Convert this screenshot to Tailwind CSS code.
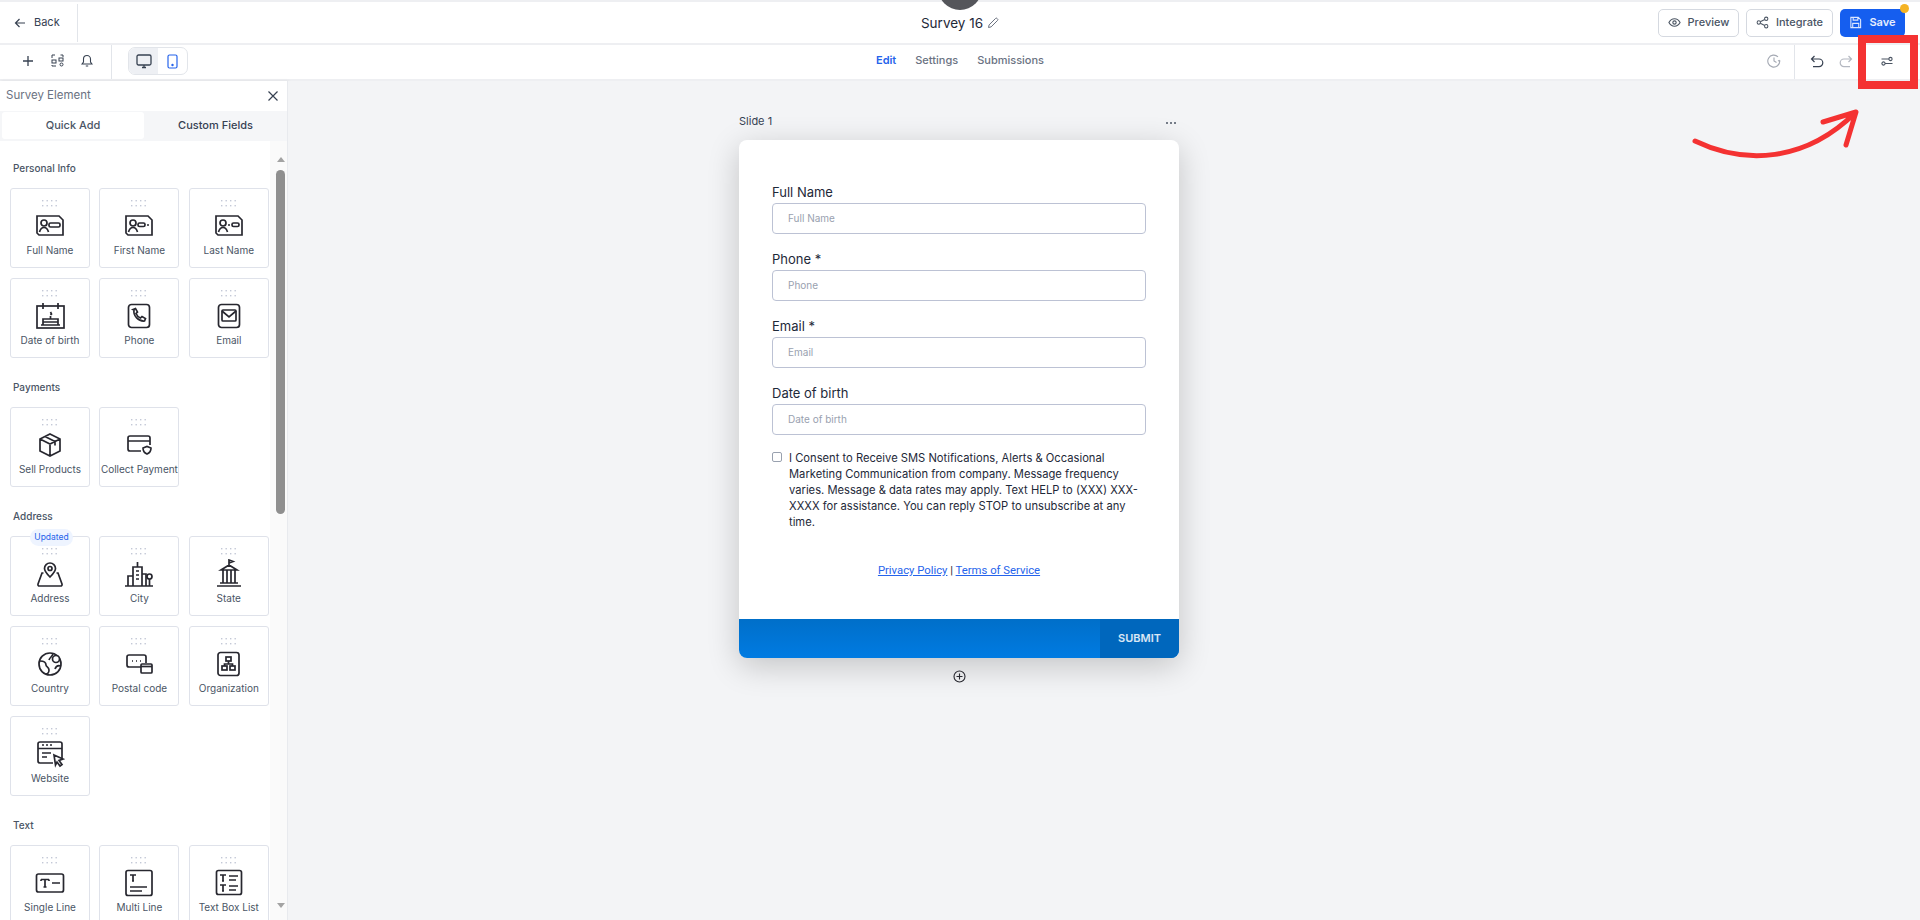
<!DOCTYPE html>
<html lang="en">
<head>
<meta charset="UTF-8" />
<meta name="viewport" content="width=device-width, initial-scale=1.0" />
<title>Survey 16</title>
<script src="https://cdn.jsdelivr.net/npm/@tailwindcss/browser@4"></script>
</head>
<body class="relative w-[1920px] h-[920px] overflow-hidden bg-white font-['Inter','Noto_Sans',sans-serif]">

<svg class="hidden">
  <symbol id="dots" viewBox="0 0 16 7"><g fill="#c3c8d6"><rect x="0" y="0" width="1.4" height="1.4"/><rect x="4.5" y="0" width="1.4" height="1.4"/><rect x="9" y="0" width="1.4" height="1.4"/><rect x="13.5" y="0" width="1.4" height="1.4"/><rect x="0" y="5" width="1.4" height="1.4"/><rect x="4.5" y="5" width="1.4" height="1.4"/><rect x="9" y="5" width="1.4" height="1.4"/><rect x="13.5" y="5" width="1.4" height="1.4"/></g></symbol>
</svg>

<!-- top bar -->
<header class="h-[45px] border-t-2 border-b-2 border-[#eeeff2] grid grid-cols-[1fr_auto_1fr] items-center">
  <div class="flex items-center h-full">
    <div class="w-[78px] h-[38px] border-r border-[#e2e5ea] flex items-center pl-[14px] gap-[8px] text-[11px] text-gray-700">
      <svg width="12" height="12" viewBox="0 0 12 12" fill="none" stroke="#374151" stroke-width="1.2"><path d="M11 6H1.5M5.5 2 1.5 6l4 4"/></svg>
      <span>Back</span>
    </div>
  </div>
  <div class="flex items-center gap-[4px] text-[13.5px] text-gray-800 pt-[1px]">
    <span>Survey 16</span>
    <svg width="12" height="12" viewBox="0 0 12 12" fill="none" stroke="#6b7280" stroke-width="1"><path d="M1.5 10.5l.6-2.6L8.6 1.4a1 1 0 0 1 1.4 0l.6.6a1 1 0 0 1 0 1.4L4.1 9.9z"/></svg>
  </div>
  <div class="flex items-center justify-end gap-[7px] pr-[15px] text-[11px] font-medium">
    <button class="w-[81px] h-[28px] border border-[#d5d9e0] rounded-[5px] flex items-center justify-center gap-[7px] text-gray-600">
      <svg width="13" height="13" viewBox="0 0 14 14" fill="none" stroke="#4b5563" stroke-width="1.2"><path d="M1 7s2.2-4 6-4 6 4 6 4-2.2 4-6 4-6-4-6-4z"/><circle cx="7" cy="7" r="1.8"/></svg>Preview
    </button>
    <button class="w-[87px] h-[28px] border border-[#d5d9e0] rounded-[5px] flex items-center justify-center gap-[7px] text-gray-600">
      <svg width="13" height="13" viewBox="0 0 14 14" fill="none" stroke="#4b5563" stroke-width="1.1"><circle cx="11" cy="3" r="1.8"/><circle cx="3" cy="7" r="1.8"/><circle cx="11" cy="11" r="1.8"/><path d="M4.6 6.2l4.8-2.4M4.6 7.8l4.8 2.4"/></svg>Integrate
    </button>
    <button class="relative w-[65px] h-[28px] bg-[#155eef] rounded-[5px] flex items-center justify-center gap-[7px] text-white/90 font-semibold">
      <svg width="13" height="13" viewBox="0 0 14 14" fill="none" stroke="#dbe6ff" stroke-width="1.2"><path d="M2 1.5h8l2.5 2.5v8.5H2zM4.5 1.5v3h5v-3M4 12.5V8h6.5v4.5"/></svg>Save
      <span class="absolute -top-[5px] -right-[4px] w-[9px] h-[9px] rounded-full bg-[#f5b324]"></span>
    </button>
  </div>
</header>

<!-- toolbar -->
<div class="h-[36px] border-b-2 border-[#eeeff2] grid grid-cols-[1fr_auto_1fr] items-center">
  <div class="flex items-center h-full">
    <div class="w-[112px] h-full border-r border-[#e2e5ea] flex items-center pl-[22px] pb-[3px] gap-[17px]">
      <svg width="12" height="12" viewBox="0 0 12 12" fill="none" stroke="#374151" stroke-width="1.3"><path d="M6 1v10M1 6h10"/></svg>
      <svg width="13" height="13" viewBox="0 0 13 13" fill="none" stroke="#374151" stroke-width="1"><path d="M1 4V1h3M9.5 1H12v2"/><rect x="1" y="6" width="4" height="3"/><rect x="8" y="4" width="4" height="3"/><circle cx="10.5" cy="10.5" r="1.5"/><path d="M1 11v1h4"/></svg>
      <svg width="12" height="13" viewBox="0 0 12 13" fill="none" stroke="#374151" stroke-width="1.1"><path d="M1 10h10L9.5 8V5a3.5 3.5 0 0 0-7 0v3zM4.8 12h2.4"/></svg>
    </div>
    <div class="ml-[16px] -mt-[2px] w-[60px] h-[28px] border border-[#e2e5ea] rounded-[7px] flex overflow-hidden">
      <div class="w-[29px] bg-[#eef0f4] flex items-center justify-center">
        <svg width="16" height="15" viewBox="0 0 16 15" fill="none" stroke="#374151" stroke-width="1.3"><rect x="1" y="1" width="14" height="10" rx="1.5"/><path d="M6 13.5h4M8 11v2"/></svg>
      </div>
      <div class="flex-1 flex items-center justify-center pr-[1px]">
        <svg width="11" height="15" viewBox="0 0 11 15" fill="none" stroke="#2563eb" stroke-width="1.2"><rect x="1" y="1" width="9" height="13" rx="1.5"/><circle cx="5.5" cy="11" r=".6" fill="#2563eb"/></svg>
      </div>
    </div>
  </div>
  <nav class="flex items-center gap-[19px] pb-[3px] text-[11px] font-medium text-gray-500">
    <span class="text-[#2563eb] font-semibold">Edit</span>
    <span>Settings</span>
    <span>Submissions</span>
  </nav>
  <div class="flex items-center justify-end h-full">
    <svg class="-mt-[2px]" width="14" height="14" viewBox="0 0 14 14" fill="none" stroke="#a3a8b2" stroke-width="1.1"><path d="M12.8 7A6 6 0 1 1 11 2.8M7 3.5V7l2.5 1.5M13 6l-.8 1.2L11 6.4"/></svg>
    <div class="w-px h-full bg-[#e2e5ea] ml-[13px]"></div>
    <svg class="ml-[15px] -mt-[2px]" width="14" height="13" viewBox="0 0 14 13" fill="none" stroke="#374151" stroke-width="1.2"><path d="M4.5 1 1.5 4l3 3M1.5 4H9a3.8 3.8 0 0 1 0 7.6H3"/></svg>
    <svg class="ml-[15px] -mt-[2px]" width="14" height="13" viewBox="0 0 14 13" fill="none" stroke="#b4b8c1" stroke-width="1.2"><path d="M9.5 1l3 3-3 3M12.5 4H5a3.8 3.8 0 0 0 0 7.6h6"/></svg>
    <svg class="ml-[28px] mr-[27px] -mt-[2px]" width="12" height="10" viewBox="0 0 12 10" fill="none" stroke="#4b5563" stroke-width="1.1"><path d="M.5 3H8M4 7.5h7.5"/><circle cx="9.5" cy="3" r="1.6"/><circle cx="2.5" cy="7.5" r="1.6"/></svg>
  </div>
</div>

<div class="flex h-[839px]">
  <!-- left panel -->
  <aside class="w-[288px] shrink-0 bg-white flex flex-col shadow-[1px_0_3px_rgba(0,0,0,0.08)] border-r border-[#e8eaee]">
    <div class="h-[30px] shrink-0 flex items-center justify-between pl-[6px] pr-[8px] text-[11.5px] text-gray-500">
      <span>Survey Element</span>
      <svg width="12" height="12" viewBox="0 0 12 12" fill="none" stroke="#374151" stroke-width="1.2"><path d="M1.5 1.5l9 9M10.5 1.5l-9 9"/></svg>
    </div>
    <div class="h-[30px] shrink-0 bg-[#f5f6f8] flex text-[11px] font-medium text-gray-600 pl-[2px] pt-[1px]">
      <div class="w-[142px] h-[27px] bg-white rounded-[3px] flex items-center justify-center">Quick Add</div>
      <div class="flex-1 h-[27px] flex items-center justify-center text-gray-700">Custom Fields</div>
    </div>
    <div class="flex flex-1 overflow-hidden">
      <div class="w-[270px] shrink-0 pl-[10px] pt-[20px] overflow-hidden text-[10px] text-gray-600">

        <div class="h-[14px] pl-[3px] text-[10px] font-medium leading-[14px] mb-[13px]">Personal Info</div>
        <div class="grid grid-cols-[80px_80px_80px] gap-x-[9.4px] gap-y-[10px]">
          <div class="relative h-20 border border-[#dfe2ea] rounded-[3px] flex flex-col items-center pt-[11px]">
            <svg width="16" height="7"><use href="#dots"/></svg>
            <svg class="mt-[4px]" width="30" height="30" viewBox="0 0 30 30" fill="none" stroke="#27272f" stroke-width="1.7"><path d="M2 5h22l4 4v15H4l-2-2z"/><circle cx="9" cy="12" r="3"/><path d="M4.5 21c.8-3 2.5-4.5 4.5-4.5s3.7 1.5 4.5 4.5"/><rect x="14" y="12" width="11" height="4" rx="1.5"/></svg>
            <span class="mt-[2px] leading-[14px]">Full Name</span>
          </div>
          <div class="relative h-20 border border-[#dfe2ea] rounded-[3px] flex flex-col items-center pt-[11px]">
            <svg width="16" height="7"><use href="#dots"/></svg>
            <svg class="mt-[4px]" width="30" height="30" viewBox="0 0 30 30" fill="none" stroke="#27272f" stroke-width="1.7"><path d="M2 5h22l4 4v15H4l-2-2z"/><circle cx="9" cy="12" r="3"/><path d="M4.5 21c.8-3 2.5-4.5 4.5-4.5s3.7 1.5 4.5 4.5"/><rect x="14" y="12" width="7" height="3.5" rx="1.5"/><path d="M23 14h2"/></svg>
            <span class="mt-[2px] leading-[14px]">First Name</span>
          </div>
          <div class="relative h-20 border border-[#dfe2ea] rounded-[3px] flex flex-col items-center pt-[11px]">
            <svg width="16" height="7"><use href="#dots"/></svg>
            <svg class="mt-[4px]" width="30" height="30" viewBox="0 0 30 30" fill="none" stroke="#27272f" stroke-width="1.7"><path d="M2 5h22l4 4v15H4l-2-2z"/><circle cx="9" cy="12" r="3"/><path d="M4.5 21c.8-3 2.5-4.5 4.5-4.5s3.7 1.5 4.5 4.5"/><rect x="18" y="12" width="7" height="3.5" rx="1.5"/><path d="M14 14h2"/></svg>
            <span class="mt-[2px] leading-[14px]">Last Name</span>
          </div>
          <div class="relative h-20 border border-[#dfe2ea] rounded-[3px] flex flex-col items-center pt-[11px]">
            <svg width="16" height="7"><use href="#dots"/></svg>
            <svg class="mt-[4px]" width="30" height="30" viewBox="0 0 30 30" fill="none" stroke="#27272f" stroke-width="1.7"><rect x="2" y="5" width="27" height="22"/><path d="M8 2v6M23 2v6M6 24h19M8 24v-6h15v6M8 21h15M15.5 18v-3M15.5 11l1 2-1 1"/></svg>
            <span class="mt-[2px] leading-[14px]">Date of birth</span>
          </div>
          <div class="relative h-20 border border-[#dfe2ea] rounded-[3px] flex flex-col items-center pt-[11px]">
            <svg width="16" height="7"><use href="#dots"/></svg>
            <svg class="mt-[4px]" width="30" height="30" viewBox="0 0 30 30" fill="none" stroke="#27272f" stroke-width="1.7"><rect x="4.5" y="3.5" width="21" height="23" rx="3"/><path d="M9 8.5l2.500-1 2 3.500-1.500 1.500c.8 2 2.500 3.700 4.500 4.500l1.500-1.500 3.500 2-1 2.500c-6 .5-11.500-5-10.500-11z"/></svg>
            <span class="mt-[2px] leading-[14px]">Phone</span>
          </div>
          <div class="relative h-20 border border-[#dfe2ea] rounded-[3px] flex flex-col items-center pt-[11px]">
            <svg width="16" height="7"><use href="#dots"/></svg>
            <svg class="mt-[4px]" width="30" height="30" viewBox="0 0 30 30" fill="none" stroke="#27272f" stroke-width="1.7"><rect x="4.500" y="3.500" width="21" height="23" rx="3"/><rect x="8" y="9" width="14" height="11" rx="1"/><path d="M8 10l7 6 7-6"/></svg>
            <span class="mt-[2px] leading-[14px]">Email</span>
          </div>
        </div>

        <div class="h-[14px] pl-[3px] text-[10px] font-medium leading-[14px] mt-[22px] mb-[13px]">Payments</div>
        <div class="grid grid-cols-[80px_80px_80px] gap-x-[9.4px] gap-y-[10px]">
          <div class="relative h-20 border border-[#dfe2ea] rounded-[3px] flex flex-col items-center pt-[11px]">
            <svg width="16" height="7"><use href="#dots"/></svg>
            <svg class="mt-[4px]" width="30" height="30" viewBox="0 0 30 30" fill="none" stroke="#27272f" stroke-width="1.7"><path d="M15 4l10 5v12l-10 5-10-5V9zM5 9l10 5 10-5M15 14v12M10 6.500l10 5v4"/></svg>
            <span class="mt-[2px] leading-[14px]">Sell Products</span>
          </div>
          <div class="relative h-20 border border-[#dfe2ea] rounded-[3px] flex flex-col items-center pt-[11px]">
            <svg width="16" height="7"><use href="#dots"/></svg>
            <svg class="mt-[4px]" width="30" height="30" viewBox="0 0 30 30" fill="none" stroke="#27272f" stroke-width="1.7"><path d="M17 21H6a2 2 0 0 1-2-2V8a2 2 0 0 1 2-2h18a2 2 0 0 1 2 2v7M4 11h22"/><path d="M19 18l4-1.500 4 1.500c0 3-1.500 5-4 6-2.500-1-4-3-4-6z"/></svg>
            <span class="mt-[2px] leading-[14px] whitespace-nowrap">Collect Payment</span>
          </div>
        </div>

        <div class="h-[14px] pl-[3px] text-[10px] font-medium leading-[14px] mt-[22px] mb-[13px]">Address</div>
        <div class="grid grid-cols-[80px_80px_80px] gap-x-[9.4px] gap-y-[10px]">
          <div class="relative h-20 border border-[#dfe2ea] rounded-[3px] flex flex-col items-center pt-[11px]">
            <span class="absolute -top-[8px] left-[19px] w-[43px] h-[17px] rounded-full bg-[#eef4ff] text-[#2563eb] text-[8.500px] leading-[17px] text-center">Updated</span>
            <svg width="16" height="7"><use href="#dots"/></svg>
            <svg class="mt-[4px]" width="30" height="30" viewBox="0 0 30 30" fill="none" stroke="#27272f" stroke-width="1.7"><path d="M15 18c-3-3-5.500-5.500-5.500-8.500a5.500 5.500 0 0 1 11 0c0 3-2.500 5.500-5.500 8.500z"/><circle cx="15" cy="9.500" r="2"/><path d="M8.500 14H7l-4 11a1.500 1.500 0 0 0 1.500 2h21a1.500 1.500 0 0 0 1.500-2l-4-11h-1.500"/></svg>
            <span class="mt-[2px] leading-[14px]">Address</span>
          </div>
          <div class="relative h-20 border border-[#dfe2ea] rounded-[3px] flex flex-col items-center pt-[11px]">
            <svg width="16" height="7"><use href="#dots"/></svg>
            <svg class="mt-[4px]" width="30" height="30" viewBox="0 0 30 30" fill="none" stroke="#27272f" stroke-width="1.7"><path d="M1 27h28M4 27V17h5M9 27V8h9v19M18 27V15h4v12M13.500 3v5M12 12h3M12 16h3M12 20h3"/><circle cx="25.500" cy="17.500" r="2.500"/><path d="M25.500 20v7"/></svg>
            <span class="mt-[2px] leading-[14px]">City</span>
          </div>
          <div class="relative h-20 border border-[#dfe2ea] rounded-[3px] flex flex-col items-center pt-[11px]">
            <svg width="16" height="7"><use href="#dots"/></svg>
            <svg class="mt-[4px]" width="30" height="30" viewBox="0 0 30 30" fill="none" stroke="#27272f" stroke-width="1.7"><path d="M3 27h24M6 24h18M7 11h16l-8-5zM15 6V1l4 1.500-4 1.500M9 11v13M13 11v13M17 11v13M21 11v13"/></svg>
            <span class="mt-[2px] leading-[14px]">State</span>
          </div>
          <div class="relative h-20 border border-[#dfe2ea] rounded-[3px] flex flex-col items-center pt-[11px]">
            <svg width="16" height="7"><use href="#dots"/></svg>
            <svg class="mt-[4px]" width="30" height="30" viewBox="0 0 30 30" fill="none" stroke="#27272f" stroke-width="1.7"><circle cx="15" cy="15" r="11"/><path d="M5 12c4 0 6 2 6 4s3 2 3 5-2 4-3 4M18 5c-1 3-3 3-4 6M26 17c-3-1-5 0-6 3"/><circle cx="21" cy="10" r="3.500" fill="#fff"/></svg>
            <span class="mt-[2px] leading-[14px]">Country</span>
          </div>
          <div class="relative h-20 border border-[#dfe2ea] rounded-[3px] flex flex-col items-center pt-[11px]">
            <svg width="16" height="7"><use href="#dots"/></svg>
            <svg class="mt-[4px]" width="30" height="30" viewBox="0 0 30 30" fill="none" stroke="#27272f" stroke-width="1.7"><path d="M17 18H5a2 2 0 0 1-2-2V8a2 2 0 0 1 2-2h15a2 2 0 0 1 2 2v6M8 12h1M12 12h1M16 12h1"/><rect x="17" y="15" width="11" height="9" rx="1"/><path d="M17 17.500h11"/></svg>
            <span class="mt-[2px] leading-[14px]">Postal code</span>
          </div>
          <div class="relative h-20 border border-[#dfe2ea] rounded-[3px] flex flex-col items-center pt-[11px]">
            <svg width="16" height="7"><use href="#dots"/></svg>
            <svg class="mt-[4px]" width="30" height="30" viewBox="0 0 30 30" fill="none" stroke="#27272f" stroke-width="1.7"><rect x="4" y="3.500" width="21" height="23" rx="2.500"/><rect x="12" y="8" width="5" height="4"/><rect x="8" y="17" width="5" height="4"/><rect x="16" y="17" width="5" height="4"/><path d="M14.500 12v3M10.500 17v-2h8v2"/></svg>
            <span class="mt-[2px] leading-[14px]">Organization</span>
          </div>
          <div class="relative h-20 border border-[#dfe2ea] rounded-[3px] flex flex-col items-center pt-[11px]">
            <svg width="16" height="7"><use href="#dots"/></svg>
            <svg class="mt-[4px]" width="30" height="30" viewBox="0 0 30 30" fill="none" stroke="#27272f" stroke-width="1.7"><path d="M18 24H5a2 2 0 0 1-2-2V5a2 2 0 0 1 2-2h20a2 2 0 0 1 2 2v14M3 9.500h24M7 6h2M11 6h2M15 6h2M7 14h9M7 18h5"/><path d="M19 16l9 4-4 1.500 3 4-2 1.500-3-4-1.500 3z"/></svg>
            <span class="mt-[2px] leading-[14px]">Website</span>
          </div>
        </div>

        <div class="h-[14px] pl-[3px] text-[10px] font-medium leading-[14px] mt-[22px] mb-[13px]">Text</div>
        <div class="grid grid-cols-[80px_80px_80px] gap-x-[9.4px] gap-y-[10px]">
          <div class="relative h-20 border border-[#dfe2ea] rounded-[3px] flex flex-col items-center pt-[11px]">
            <svg width="16" height="7"><use href="#dots"/></svg>
            <svg class="mt-[4px]" width="30" height="30" viewBox="0 0 30 30" fill="none" stroke="#27272f" stroke-width="1.7"><rect x="1.500" y="6" width="27" height="18" rx="2"/><path d="M6 11.500h8M6 11.500v1.500M14 11.500v1.500M10 11.500V19M8.500 19h3M17 15h8"/></svg>
            <span class="mt-[2px] leading-[14px]">Single Line</span>
          </div>
          <div class="relative h-20 border border-[#dfe2ea] rounded-[3px] flex flex-col items-center pt-[11px]">
            <svg width="16" height="7"><use href="#dots"/></svg>
            <svg class="mt-[4px]" width="30" height="30" viewBox="0 0 30 30" fill="none" stroke="#27272f" stroke-width="1.7"><rect x="2" y="2.500" width="26" height="25" rx="2"/><path d="M6 7h6M9 7v6M8 13h2M6 19h17M6 23h12"/></svg>
            <span class="mt-[2px] leading-[14px]">Multi Line</span>
          </div>
          <div class="relative h-20 border border-[#dfe2ea] rounded-[3px] flex flex-col items-center pt-[11px]">
            <svg width="16" height="7"><use href="#dots"/></svg>
            <svg class="mt-[4px]" width="30" height="30" viewBox="0 0 30 30" fill="none" stroke="#27272f" stroke-width="1.7"><rect x="2.500" y="2.500" width="25" height="24" rx="2"/><path d="M6 7h6M9 7v6M8 13h2M6 17h6M9 17v6M8 23h2M15 8h9M15 12h7M15 18h9M15 22h7"/></svg>
            <span class="mt-[2px] leading-[14px] whitespace-nowrap">Text Box List</span>
          </div>
        </div>
      </div>

      <!-- scrollbar -->
      <div class="w-[18px] shrink-0 bg-[#fafafa] flex flex-col items-center pl-[3px]">
        <div class="mt-[16px] w-0 h-0 border-x-[4px] border-x-transparent border-b-[5px] border-b-[#a3a3a3]"></div>
        <div class="mt-[8px] w-[9px] h-[344px] bg-[#8f8f8f] rounded-full"></div>
        <div class="mt-[389px] w-0 h-0 border-x-[4px] border-x-transparent border-t-[5px] border-t-[#a3a3a3]"></div>
      </div>
    </div>
  </aside>

  <!-- canvas -->
  <main class="flex-1 bg-[#f3f4f6] pl-[451px] pt-[32px]">
    <div class="w-[440px]">
      <div class="h-[16px] mb-[11px] flex items-center justify-between pr-[2px] text-[11px] text-gray-700">
        <span>Slide 1</span>
        <svg class="mt-[4px]" width="12" height="4" viewBox="0 0 12 4" fill="#4b5563"><circle cx="2" cy="2" r="1"/><circle cx="6" cy="2" r="1"/><circle cx="10" cy="2" r="1"/></svg>
      </div>
      <div class="h-[518px] bg-white rounded-lg overflow-hidden flex flex-col shadow-[0_8px_32px_rgba(0,0,0,0.2)]">
        <div class="flex-1 px-[33px] pt-[44px] text-[13px] text-gray-800">
          <label class="block h-[16px] leading-[16px] mb-[3px]">Full Name</label>
          <input class="block w-full h-[31px] border-[1.5px] border-[#bcc2d4] rounded-[4px] pl-[15px] pb-[2px] text-[10px] placeholder:text-gray-400 mb-[17px]" placeholder="Full Name" />
          <label class="block h-[16px] leading-[16px] mb-[3px]">Phone *</label>
          <input class="block w-full h-[31px] border-[1.5px] border-[#bcc2d4] rounded-[4px] pl-[15px] pb-[2px] text-[10px] placeholder:text-gray-400 mb-[17px]" placeholder="Phone" />
          <label class="block h-[16px] leading-[16px] mb-[3px]">Email *</label>
          <input class="block w-full h-[31px] border-[1.5px] border-[#bcc2d4] rounded-[4px] pl-[15px] pb-[2px] text-[10px] placeholder:text-gray-400 mb-[17px]" placeholder="Email" />
          <label class="block h-[16px] leading-[16px] mb-[3px]">Date of birth</label>
          <input class="block w-full h-[31px] border-[1.5px] border-[#bcc2d4] rounded-[4px] pl-[15px] pb-[1px] text-[10px] placeholder:text-gray-400" placeholder="Date of birth" />
          <div class="flex mt-[15px] gap-[7px] text-[11.2px] leading-[16px]">
            <input type="checkbox" class="appearance-none shrink-0 mt-[2px] w-[10px] h-[10px] border border-gray-400 rounded-[2px]" />
            <p>I Consent to Receive SMS Notifications, Alerts &amp; Occasional Marketing Communication from company. Message frequency varies. Message &amp; data rates may apply. Text HELP to (XXX) XXX-XXXX for assistance. You can reply STOP to unsubscribe at any time.</p>
          </div>
          <div class="mt-[33px] text-center text-[11.300px] leading-[16px] font-['Roboto','Inter',sans-serif]">
            <a class="text-[#2563eb] underline">Privacy Policy</a> | <a class="text-[#2563eb] underline">Terms of Service</a>
          </div>
        </div>
        <div class="h-[39px] shrink-0 flex bg-[linear-gradient(180deg,#006fc9,#007be2)]">
          <div class="ml-auto w-[79px] bg-[#0067bd] flex items-center justify-center text-[11px] font-semibold text-white/85">SUBMIT</div>
        </div>
      </div>
      <div class="flex justify-center mt-[12px]">
        <svg width="13" height="13" viewBox="0 0 13 13" fill="none" stroke="#27272f" stroke-width="1.100"><circle cx="6.500" cy="6.500" r="5.500"/><path d="M6.500 3.500v6M3.500 6.500h6"/></svg>
      </div>
    </div>
  </main>
</div>

<!-- overlays: dark blob at top, red callout -->
<div class="absolute left-[938px] -top-[34px] w-[44px] h-[44px] rounded-full bg-[#55565b]"></div>
<div class="absolute left-[1858px] top-[35px] w-[60px] h-[54px] border-[8px] border-[#f43232]"></div>
<svg class="absolute left-0 top-0 pointer-events-none" width="1920" height="920" fill="none" stroke="#f43232" stroke-width="5" stroke-linecap="round" stroke-linejoin="round">
  <path d="M1695 141C1745 165 1805 162 1855 113M1823 122 1856 112 1846 145"/>
</svg>
</body>
</html>
